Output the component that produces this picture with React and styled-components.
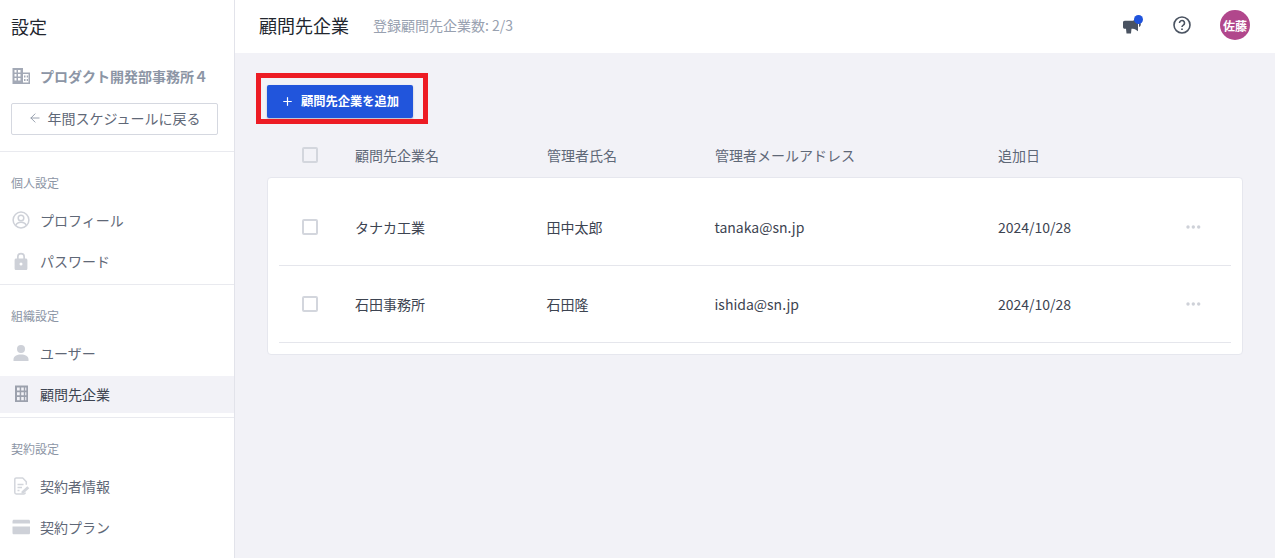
import React from "react";
import styled, { createGlobalStyle } from "styled-components";
import { ArrowLeft, Plus } from "lucide-react";

const GlobalStyle = createGlobalStyle`
  html, body {
    margin: 0;
    padding: 0;
    height: 100%;
    overflow: hidden;
    background: #f2f2f7;
    font-family: "Noto Sans CJK JP", "Noto Sans", sans-serif;
  }
  *, *::before, *::after { box-sizing: border-box; }
`;

const Page = styled.div`
  display: flex;
  width: 1275px;
  height: 558px;
  overflow: hidden;
`;

const Sidebar = styled.aside`
  width: 235px;
  flex: none;
  background: #fff;
  border-right: 1px solid #e2e3ea;
`;

const SideTitle = styled.h1`
  margin: 0;
  height: 53px;
  padding: 16px 0 0 11px;
  font-size: 18px;
  line-height: 21px;
  font-weight: 400;
  color: #23272f;
`;

const OrgRow = styled.div`
  display: flex;
  align-items: center;
  gap: 10px;
  height: 24px;
  margin: 11px 0 0 12px;
  font-size: 14px;
  font-weight: 700;
  color: #8c95a5;
  white-space: nowrap;
`;

const BackButton = styled.button`
  display: flex;
  align-items: center;
  justify-content: center;
  gap: 5px;
  width: 207px;
  height: 32px;
  margin: 15px 0 16px 11px;
  padding: 0 0 2px;
  background: #fff;
  border: 1px solid #d5d8e0;
  border-radius: 2px;
  font: inherit;
  font-size: 14px;
  color: #5f6877;
`;

const Section = styled.section`
  border-top: 1px solid #e9eaef;
  padding-top: 22px;
  height: ${(p) => p.$height}px;
`;

const SectionLabel = styled.div`
  padding-left: 11px;
  height: 17px;
  font-size: 12px;
  line-height: 17px;
  color: #8c95a5;
`;

const NavList = styled.nav`
  display: flex;
  flex-direction: column;
  gap: 4px;
  margin-top: 11px;
`;

const NavItem = styled.div`
  display: flex;
  align-items: center;
  gap: 10px;
  height: 37px;
  padding: 0 0 1px 12px;
  font-size: 14px;
  color: ${(p) => (p.$active ? "#3d4451" : "#5f6877")};
  background: ${(p) => (p.$active ? "#f2f2f7" : "transparent")};
`;

const NavIcon = styled.svg`
  width: 18px;
  height: 18px;
  flex: none;
`;

const Main = styled.main`
  flex: 1;
  min-width: 0;
`;

const Header = styled.header`
  display: flex;
  align-items: center;
  height: 53px;
  padding: 0 25px 3px 24px;
  background: #fff;
`;

const PageTitle = styled.h2`
  margin: 0;
  font-size: 18px;
  font-weight: 400;
  color: #23272f;
`;

const Count = styled.span`
  margin-left: 24px;
  font-size: 14px;
  color: #98a1b0;
`;

const HeaderIcons = styled.div`
  display: flex;
  align-items: center;
  margin-left: auto;
`;

const IconSlot = styled.div`
  position: relative;
  display: flex;
  width: 20px;
  height: 20px;
  margin-right: ${(p) => p.$gap}px;
`;

const Dot = styled.span`
  position: absolute;
  top: 0;
  right: -1px;
  width: 9px;
  height: 9px;
  border-radius: 50%;
  background: #1f53dc;
`;

const Avatar = styled.div`
  display: flex;
  align-items: center;
  justify-content: center;
  width: 30px;
  height: 30px;
  border-radius: 50%;
  background: #b1478c;
  color: #fff;
  font-size: 12px;
  font-weight: 700;
`;

const Content = styled.div`
  padding: 32px 32px 0;
`;

const ButtonWrap = styled.div`
  position: relative;
  width: 146px;
  height: 33px;

  &::after {
    content: "";
    position: absolute;
    left: -11px;
    top: -12px;
    width: 172px;
    height: 51px;
    border: 5px solid #ed1c24;
    pointer-events: none;
  }
`;

const AddButton = styled.button`
  display: flex;
  align-items: center;
  justify-content: center;
  gap: 7px;
  width: 100%;
  height: 100%;
  padding: 0 0 1px;
  background: #2155dc;
  border: 0;
  border-radius: 2px;
  box-shadow: 0 1px 2px rgba(30, 40, 80, 0.3);
  color: #fff;
  font: inherit;
  font-size: 12.25px;
  font-weight: 700;
`;

const HeadRow = styled.div`
  display: grid;
  grid-template-columns: 53px 192px 168px 283px 188px 1fr;
  align-items: center;
  height: 59px;
  padding: 15px 12px 0 35px;
  font-size: 14px;
  color: #5f6877;
`;

const Card = styled.div`
  width: 976px;
  height: 178px;
  padding: 11px 11px 0;
  background: #fff;
  border: 1px solid #e6e7ee;
  border-radius: 4px;
`;

const Row = styled.div`
  display: grid;
  grid-template-columns: 53px 191.5px 168px 283.5px 188px 1fr;
  align-items: center;
  height: 77px;
  padding-left: 23px;
  border-bottom: 1px solid #e5e6ec;
  font-size: 14px;
  color: #3d4451;
`;

const Check = styled.span`
  display: block;
  width: 16px;
  height: 16px;
  background: ${(p) => (p.$head ? "#f2f2f7" : "#fff")};
  border: 2px solid #d3d6dd;
  border-radius: 2px;
`;

const More = styled.svg`
  width: 15px;
  height: 4px;
`;

const icons = {
  profile: (
    <>
      <circle cx="9" cy="9" r="7.9" fill="none" stroke="#ced1d8" strokeWidth="1.5" />
      <circle cx="9" cy="7" r="2.8" fill="none" stroke="#ced1d8" strokeWidth="1.5" />
      <path d="M3.800 14.400c.8-2.400 2.800-3.200 5.200-3.200s4.400.8 5.200 3.200" fill="none" stroke="#ced1d8" strokeWidth="1.5" />
    </>
  ),
  lock: (
    <path
      fillRule="evenodd"
      fill="#ced1d8"
      d="M5 6.500V4.800a4 4 0 0 1 8 0v1.700h.8c.9 0 1.600.7 1.600 1.600v8.300c0 .9-.7 1.600-1.600 1.600H4.200c-.9 0-1.600-.7-1.600-1.600V8.100c0-.9.7-1.600 1.600-1.600H5zm1.700 0h4.600V4.800a2.300 2.300 0 0 0-4.600 0v1.700zM9 10.600a1.500 1.500 0 1 0 0 3 1.500 1.500 0 0 0 0-3z"
    />
  ),
  user: (
    <>
      <circle cx="9" cy="5" r="4" fill="#ced1d8" />
      <path d="M1.500 15.500c0-3.400 3.300-5 7.500-5s7.500 1.600 7.500 5V17h-15z" fill="#ced1d8" />
    </>
  ),
  company: (
    <path
      fillRule="evenodd"
      fill="#9ca1ad"
      d="M3 .500h13V17H3zM5 2.500v3h2.700v-3zm4.200 0v3h2.600v-3zm4 0v3H14.300v-3zM5 7.300v3h2.700v-3zm4.200 0v3h2.600v-3zm4 0v3H14.300v-3zM5 12v3.200h2.700V12zm4.200 0v3.200h2.600V12zm4 0v3.200H14.300V12z"
    />
  ),
  contract: (
    <>
      <path d="M11 1H4.200C3.400 1 2.800 1.600 2.800 2.400v13.200c0 .8.600 1.400 1.400 1.400H12c.8 0 1.300-.6 1.300-1.400" fill="none" stroke="#d3d6dc" strokeWidth="1.500" />
      <path d="M10.800 1l3.500 3.800v3" fill="none" stroke="#d3d6dc" strokeWidth="1.500" />
      <path d="M5.500 7.500h6M5.500 10.500h4.500M5.500 13.500h2" stroke="#d3d6dc" strokeWidth="1.500" />
      <path d="M9.500 14.500l5.800-5.300 2 2.100-5.800 5.200H9.500z" fill="#d3d6dc" />
    </>
  ),
  card: (
    <path
      fillRule="evenodd"
      fill="#ced1d8"
      d="M2 1.800h14.500c1 0 1.500.6 1.500 1.500v11.400c0 1-.5 1.500-1.500 1.500H2c-1 0-1.500-.5-1.500-1.500V3.300c0-.9.5-1.500 1.500-1.500zM.5 5.500v3h17.500v-3z"
    />
  ),
};

function Icon({ name }) {
  return <NavIcon viewBox="0 0 18 18">{icons[name]}</NavIcon>;
}

function Dots() {
  return (
    <More viewBox="0 0 15 4">
      <circle cx="2" cy="2" r="1.700" fill="#ced1d8" />
      <circle cx="7.300" cy="2" r="1.700" fill="#ced1d8" />
      <circle cx="12.700" cy="2" r="1.700" fill="#ced1d8" />
    </More>
  );
}

const rows = [
  { name: "タナカ工業", admin: "田中太郎", mail: "tanaka@sn.jp", date: "2024/10/28" },
  { name: "石田事務所", admin: "石田隆", mail: "ishida@sn.jp", date: "2024/10/28" },
];

export default function App() {
  return (
    <>
      <GlobalStyle />
      <Page>
        <Sidebar>
          <SideTitle>設定</SideTitle>
          <OrgRow>
            <NavIcon viewBox="0 0 18 18">
              <path
                fillRule="evenodd"
                fill="#a3a9b6"
                d="M.5 1h10.500v4.500H18V17H.5zM2.500 3v2.500h2V3zm3.500 0v2.500h2.500V3zM2.500 7v2.500h2V7zM6 7v2.500h2.500V7zM2.500 11v2.500h2V11zM6 11v2.500h2.500V11zM11 7v8.500h5.500V7zm1 1.500h1.500v2H12zm2.700 0h1.300v2h-1.300zM12 12h1.500v2H12zm2.700 0h1.300v2h-1.300z"
              />
            </NavIcon>
            プロダクト開発部事務所４
          </OrgRow>
          <BackButton>
            <ArrowLeft size={14} color="#8c95a5" strokeWidth={1.5} />
            年間スケジュールに戻る
          </BackButton>
          <Section $height={133}>
            <SectionLabel>個人設定</SectionLabel>
            <NavList>
              <NavItem><Icon name="profile" />プロフィール</NavItem>
              <NavItem><Icon name="lock" />パスワード</NavItem>
            </NavList>
          </Section>
          <Section $height={133}>
            <SectionLabel>組織設定</SectionLabel>
            <NavList>
              <NavItem><Icon name="user" />ユーザー</NavItem>
              <NavItem $active><Icon name="company" />顧問先企業</NavItem>
            </NavList>
          </Section>
          <Section $height={140}>
            <SectionLabel>契約設定</SectionLabel>
            <NavList>
              <NavItem><Icon name="contract" />契約者情報</NavItem>
              <NavItem><Icon name="card" />契約プラン</NavItem>
            </NavList>
          </Section>
        </Sidebar>
        <Main>
          <Header>
            <PageTitle>顧問先企業</PageTitle>
            <Count>登録顧問先企業数: 2/3</Count>
            <HeaderIcons>
              <IconSlot $gap={30}>
                <svg width="20" height="20" viewBox="0 0 20 20">
                  <path d="M1 7.500c0-1 .6-1.800 1.800-1.800H11l5-3v13.500l-3-2-2-.5H9.500L9 18.500H4.500L4 13.800H2.800C1.600 13.800 1 13 1 12z" fill="#4a5361" />
                  <path d="M17 7c1.200.5 1.800 1.300 1.800 2.500S18.200 11.500 17 12z" fill="#4a5361" />
                </svg>
                <Dot />
              </IconSlot>
              <IconSlot $gap={28}>
                <svg width="20" height="20" viewBox="0 0 20 20" fill="none" stroke="#4a5361">
                  <circle cx="10" cy="10" r="8" strokeWidth="1.600" />
                  <path d="M7.500 8a2.500 2.500 0 1 1 3.800 2.100c-.8.500-1.300 1-1.300 2" strokeWidth="1.600" />
                  <path d="M10 13.600v1.500" strokeWidth="1.700" />
                </svg>
              </IconSlot>
              <Avatar>佐藤</Avatar>
            </HeaderIcons>
          </Header>
          <Content>
            <ButtonWrap>
              <AddButton>
                <Plus size={13} strokeWidth={2.2} />
                顧問先企業を追加
              </AddButton>
            </ButtonWrap>
            <HeadRow>
              <Check $head />
              <span>顧問先企業名</span>
              <span>管理者氏名</span>
              <span>管理者メールアドレス</span>
              <span>追加日</span>
            </HeadRow>
            <Card>
              {rows.map((r) => (
                <Row key={r.name}>
                  <Check />
                  <span>{r.name}</span>
                  <span>{r.admin}</span>
                  <span>{r.mail}</span>
                  <span>{r.date}</span>
                  <Dots />
                </Row>
              ))}
            </Card>
          </Content>
        </Main>
      </Page>
    </>
  );
}
